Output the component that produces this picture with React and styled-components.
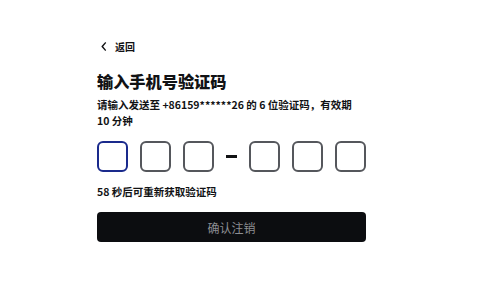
import React from 'react';
import styled, { createGlobalStyle } from 'styled-components';

const GlobalStyle = createGlobalStyle`
  html, body {
    margin: 0;
    padding: 0;
    background: #ffffff;
  }
  body {
    font-family: "Noto Sans CJK SC", "Noto Sans", sans-serif;
    color: #111214;
  }
`;

const Page = styled.div`
  width: 478px;
  height: 281px;
  display: flex;
  box-sizing: border-box;
  padding: 38px 0 0 97px;
`;

const Panel = styled.div`
  width: 269px;
  display: flex;
  flex-direction: column;
`;

const BackLink = styled.button`
  display: flex;
  align-items: center;
  gap: 7px;
  border: 0;
  background: none;
  padding: 0 0 0 3px;
  height: 16px;
  font-family: inherit;
  font-size: 10px;
  font-weight: 700;
  color: #111214;
  cursor: pointer;
  align-self: flex-start;
`;

const Title = styled.h1`
  margin: 16px 0 0;
  font-size: 16.2px;
  line-height: 22px;
  font-weight: 900;
  letter-spacing: 0;
`;

const Hint = styled.p`
  margin: 5px 0 0;
  font-size: 10.5px;
  line-height: 16px;
  font-weight: 700;
`;

const CodeRow = styled.div`
  display: flex;
  align-items: center;
  gap: 12px;
  margin-top: 12px;
`;

const CodeBox = styled.div`
  width: 31px;
  height: 31px;
  box-sizing: border-box;
  border: 2px solid ${p => (p.$active ? '#1a2a8c' : '#55575c')};
  border-radius: 6px;
  background: #fff;
`;

const Dash = styled.span`
  width: 11px;
  height: 3px;
  background: #111214;
`;

const Countdown = styled.div`
  margin-top: 12px;
  font-size: 10.5px;
  line-height: 16px;
  font-weight: 700;
`;

const SubmitButton = styled.button`
  margin-top: 12px;
  height: 30px;
  width: 100%;
  border: 0;
  border-radius: 4px;
  background: #0c0d10;
  color: #8c8d92;
  font-family: inherit;
  font-size: 12px;
  font-weight: 400;
`;

const Chevron = () => (
  <svg width="8" height="9" viewBox="0 0 8 10">
    <path d="M5.5 1 L2 5 L5.5 9" fill="none" stroke="#111214" strokeWidth="1.6" strokeLinecap="round" strokeLinejoin="round" />
  </svg>
);

const App = () => {
  const slots = [0, 1, 2, 3, 4, 5];
  return (
    <>
      <GlobalStyle />
      <Page>
        <Panel>
          <BackLink>
            <Chevron />
            返回
          </BackLink>
          <Title>输入手机号验证码</Title>
          <Hint>
            请输入发送至 +86159******26 的 6 位验证码，有效期
            <br />
            10 分钟
          </Hint>
          <CodeRow>
            {slots.slice(0, 3).map(i => (
              <CodeBox key={i} $active={i === 0} />
            ))}
            <Dash />
            {slots.slice(3).map(i => (
              <CodeBox key={i} />
            ))}
          </CodeRow>
          <Countdown>58 秒后可重新获取验证码</Countdown>
          <SubmitButton>确认注销</SubmitButton>
        </Panel>
      </Page>
    </>
  );
};

export default App;
